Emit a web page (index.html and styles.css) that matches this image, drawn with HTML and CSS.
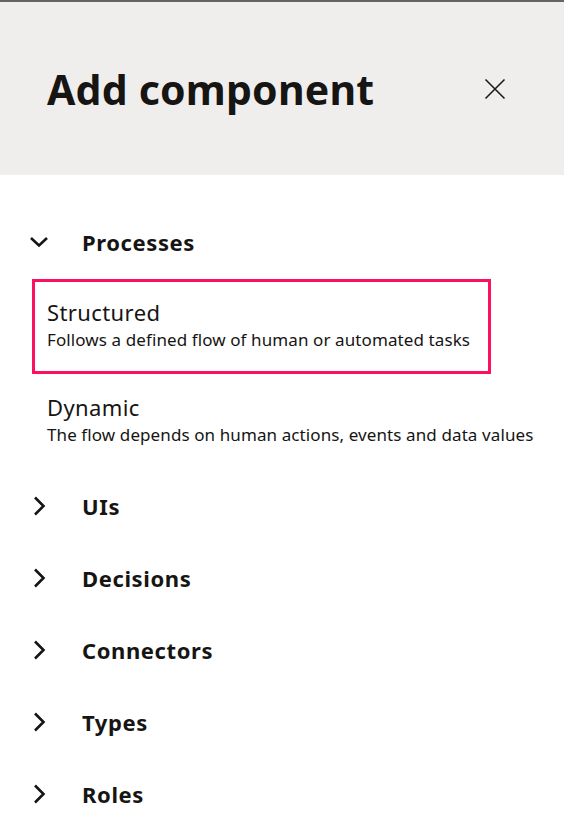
FILE: index.html
```html
<!DOCTYPE html>
<html lang="en">
<head>
<meta charset="utf-8">
<title>Add component</title>
<link rel="stylesheet" href="styles.css">
</head>
<body>
<div class="panel">
  <header class="head">
    <h1 class="title">Add component</h1>
    <button class="close" aria-label="Close">
      <svg viewBox="0 0 24 24" width="24" height="24"><path d="M2.5 2.5L21.5 21.5M21.5 2.5L2.5 21.5" fill="none" stroke="#1d1c1a" stroke-width="1.6"/></svg>
    </button>
  </header>
  <div class="list">
    <section class="group">
      <div class="row">
        <svg class="chev" viewBox="0 0 24 24" width="24" height="24"><path d="M4 8L12 15.5L20 8" fill="none" stroke="#161513" stroke-width="2.6"/></svg>
        <span class="label">Processes</span>
      </div>
      <ul class="items">
        <li class="item selected">
          <div class="item-title">Structured</div>
          <div class="item-desc">Follows a defined flow of human or automated tasks</div>
        </li>
        <li class="item">
          <div class="item-title">Dynamic</div>
          <div class="item-desc">The flow depends on human actions, events and data values</div>
        </li>
      </ul>
    </section>
    <section class="group">
      <div class="row">
        <svg class="chev" viewBox="0 0 24 24" width="24" height="24"><path d="M8 3.5L16.5 12L8 20.5" fill="none" stroke="#161513" stroke-width="2.6"/></svg>
        <span class="label">UIs</span>
      </div>
    </section>
    <section class="group">
      <div class="row">
        <svg class="chev" viewBox="0 0 24 24" width="24" height="24"><path d="M8 3.5L16.5 12L8 20.5" fill="none" stroke="#161513" stroke-width="2.6"/></svg>
        <span class="label">Decisions</span>
      </div>
    </section>
    <section class="group">
      <div class="row">
        <svg class="chev" viewBox="0 0 24 24" width="24" height="24"><path d="M8 3.5L16.5 12L8 20.5" fill="none" stroke="#161513" stroke-width="2.6"/></svg>
        <span class="label">Connectors</span>
      </div>
    </section>
    <section class="group">
      <div class="row">
        <svg class="chev" viewBox="0 0 24 24" width="24" height="24"><path d="M8 3.5L16.5 12L8 20.5" fill="none" stroke="#161513" stroke-width="2.6"/></svg>
        <span class="label">Types</span>
      </div>
    </section>
    <section class="group">
      <div class="row">
        <svg class="chev" viewBox="0 0 24 24" width="24" height="24"><path d="M8 3.5L16.5 12L8 20.5" fill="none" stroke="#161513" stroke-width="2.6"/></svg>
        <span class="label">Roles</span>
      </div>
    </section>
  </div>
</div>
</body>
</html>
```

FILE: styles.css
```css
* { box-sizing: border-box; }
html, body { margin: 0; padding: 0; background: #ffffff; }
body {
  font-family: "Noto Sans", "Open Sans", sans-serif;
  color: #161513;
  overflow: hidden;
}
.panel { width: 564px; }
.head {
  height: 175px;
  background: #f0eeec;
  border-top: 2px solid #66645f;
  display: flex;
  align-items: center;
  justify-content: space-between;
  padding: 0 47px 0 47px;
}
.title {
  margin: 0;
  font-size: 41px;
  font-weight: 700;
  line-height: 48px;
  letter-spacing: 0.2px;
  color: #161513;
}
.close {
  border: 0;
  background: transparent;
  padding: 0;
  width: 24px;
  height: 24px;
  margin-right: 10px;
  display: block;
}
.close svg { display: block; }
.list { padding-top: 31px; }
.row {
  height: 72px;
  display: flex;
  align-items: center;
  padding-left: 27px;
}
.chev { display: block; flex: none; }
.label {
  margin-left: 31px;
  font-size: 22px;
  font-weight: 700;
  line-height: 28px;
  letter-spacing: 0.6px;
}
.items {
  list-style: none;
  margin: 1px 0 1px 0;
  padding: 0;
}
.item {
  width: 459px;
  margin-left: 32px;
  border: 3px solid transparent;
  padding: 16px 12px 18px 12px;
  height: 95px;
}
.item.selected { border-color: #fc1160; }
.item-title {
  font-size: 22px;
  line-height: 28px;
  font-weight: 400;
  letter-spacing: 0.4px;
}
.item-desc {
  margin-top: 3px;
  font-size: 17px;
  line-height: 22px;
  letter-spacing: 0.1px;
  white-space: nowrap;
}
```
